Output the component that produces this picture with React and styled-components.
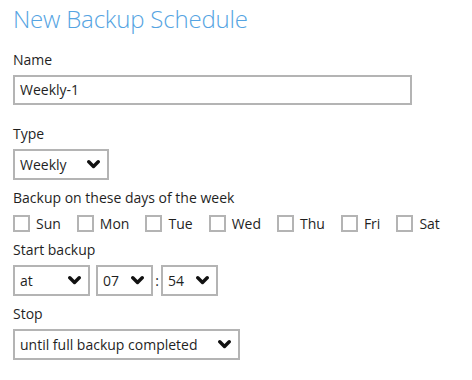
import React from "react";
import styled, { createGlobalStyle } from "styled-components";

const GlobalStyle = createGlobalStyle`
  body {
    margin: 0;
    background: #ffffff;
    font-family: "Open Sans", "Noto Sans", sans-serif;
    color: #1f1f1f;
  }
`;

const days = ["Sun", "Mon", "Tue", "Wed", "Thu", "Fri", "Sat"];

const Chevron = () => (
  <svg width="13" height="9" viewBox="0 0 13 9">
    <path
      d="M1.8 1.8 L6.5 6.5 L11.2 1.8"
      fill="none"
      stroke="#111"
      strokeWidth="3.4"
      strokeLinecap="round"
      strokeLinejoin="round"
    />
  </svg>
);

const Dropdown = ({ value, width }) => (
  <Select $width={width}>
    <span>{value}</span>
    <Chevron />
  </Select>
);

const App = () => {
  return (
    <>
      <GlobalStyle />
      <Page>
        <Title>New Backup Schedule</Title>

        <Field $gap={19}>
          <Label>Name</Label>
          <TextInput>Weekly-1</TextInput>
        </Field>

        <Field>
          <Label>Type</Label>
          <Dropdown value="Weekly" width={96} />
        </Field>

        <Field>
          <Label>Backup on these days of the week</Label>
          <DayRow>
            {days.map((d) => (
              <Day key={d}>
                <Box />
                {d}
              </Day>
            ))}
          </DayRow>
        </Field>

        <Field>
          <Label>Start backup</Label>
          <TimeRow>
            <Dropdown value="at" width={77} />
            <Spacer />
            <Dropdown value="07" width={57} />
            <Colon>:</Colon>
            <Dropdown value="54" width={57} />
          </TimeRow>
        </Field>

        <Field>
          <Label>Stop</Label>
          <Dropdown value="until full backup completed" width={227} />
        </Field>
      </Page>
    </>
  );
};

const Page = styled.div`
  padding: 4px 13px 0;
`;

const Title = styled.h1`
  margin: 0 0 16px;
  font-size: 24px;
  line-height: 30px;
  font-weight: 300;
  letter-spacing: -0.2px;
  color: #55a4e2;
`;

const Field = styled.div`
  display: flex;
  flex-direction: column;
  align-items: flex-start;
  margin-bottom: ${(p) => p.$gap || 8}px;
`;

const Label = styled.div`
  font-size: 14px;
  line-height: 20px;
  margin-bottom: 5px;
`;

const TextInput = styled.div`
  box-sizing: border-box;
  width: 399px;
  height: 30px;
  border: 2px solid #b4b4b4;
  padding: 0 5px;
  font-size: 14px;
  line-height: 26px;
`;

const Select = styled.div`
  box-sizing: border-box;
  width: ${(p) => p.$width}px;
  height: 31px;
  border: 2px solid #b4b4b4;
  padding: 0 7px 0 5px;
  display: flex;
  align-items: center;
  justify-content: space-between;
  font-size: 14px;
  white-space: nowrap;
`;

const DayRow = styled.div`
  display: flex;
  gap: 16px;
  margin-top: 2px;
`;

const Day = styled.label`
  display: flex;
  align-items: center;
  gap: 6px;
  font-size: 14px;
  line-height: 17px;
`;

const Box = styled.span`
  box-sizing: border-box;
  width: 17px;
  height: 17px;
  border: 2px solid #b4b4b4;
`;

const TimeRow = styled.div`
  display: flex;
  align-items: center;
`;

const Spacer = styled.span`
  width: 6px;
`;

const Colon = styled.span`
  width: 8px;
  text-align: center;
  font-size: 14px;
`;

export default App;
